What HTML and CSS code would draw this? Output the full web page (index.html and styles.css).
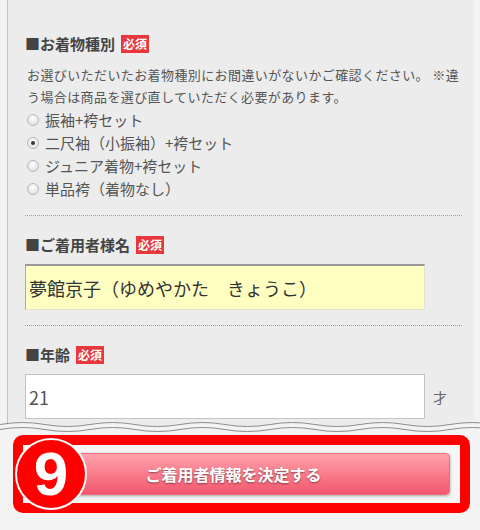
FILE: index.html
```html
<!DOCTYPE html>
<html lang="ja">
<head>
<meta charset="utf-8">
<title>ご着用者情報</title>
<link rel="stylesheet" href="styles.css">
</head>
<body>
<div class="panel">
  <section class="field">
    <h3 class="label">■お着物種別<span class="badge">必須</span></h3>
    <p class="desc">お選びいただいたお着物種別にお間違いがないかご確認ください。 ※違う場合は商品を選び直していただく必要があります。</p>
    <ul class="radios">
      <li class="radio"><span class="dot"></span>振袖+袴セット</li>
      <li class="radio checked"><span class="dot"></span>二尺袖（小振袖）+袴セット</li>
      <li class="radio"><span class="dot"></span>ジュニア着物+袴セット</li>
      <li class="radio"><span class="dot"></span>単品袴（着物なし）</li>
    </ul>
  </section>
  <section class="field">
    <h3 class="label">■ご着用者様名<span class="badge">必須</span></h3>
    <input class="input input-filled" type="text" value="夢館京子（ゆめやかた　きょうこ）">
  </section>
  <section class="field field-last">
    <h3 class="label">■年齢<span class="badge">必須</span></h3>
    <div class="age-row">
      <input class="input input-age" type="text" value="21">
      <span class="unit">才</span>
    </div>
  </section>
</div>
<svg class="wave" width="480" height="14" viewBox="0 0 480 14">
  <defs><clipPath id="pc"><rect x="8" y="0" width="466" height="14"/></clipPath></defs>
  <path clip-path="url(#pc)" fill="#ececec" d="M0 4.5 Q22.5 -0.5 45 4.5 T90 4.5 T135 4.5 T180 4.5 T225 4.5 T270 4.5 T315 4.5 T360 4.5 T405 4.5 T450 4.5 T495 4.5 L495 0 L0 0 Z"/>
  <line x1="7.5" y1="0" x2="7.5" y2="5.5" stroke="#c4c4c4"/>
  <path fill="none" stroke="#8c8c8c" d="M0 5.5 Q22.5 1.5 45 5.5 T90 5.5 T135 5.5 T180 5.5 T225 5.5 T270 5.5 T315 5.5 T360 5.5 T405 5.5 T450 5.5 T495 5.5"/>
  <path fill="none" stroke="#8c8c8c" d="M0 10.5 Q22.5 6.5 45 10.5 T90 10.5 T135 10.5 T180 10.5 T225 10.5 T270 10.5 T315 10.5 T360 10.5 T405 10.5 T450 10.5 T495 10.5"/>
</svg>
<div class="action">
  <div class="highlight">
    <span class="step">9</span>
    <button class="submit" type="button">ご着用者情報を決定する</button>
  </div>
</div>
</body>
</html>
```
FILE: styles.css
```css
html, body {
  margin: 0;
  padding: 0;
}
body {
  width: 480px;
  height: 530px;
  overflow: hidden;
  background: #f3f3f3;
  font-family: "Noto Sans CJK JP", "Noto Sans", sans-serif;
  color: #555;
}
.panel {
  box-sizing: border-box;
  margin-left: 7px;
  width: 467px;
  border-left: 1px solid #c4c4c4;
  background: #ececec;
  padding: 34px 12px 0 17px;
}
.field {
  padding: 19px 0 15px;
  border-top: 1px dotted #a0a0a0;
}
.field:first-child {
  padding-top: 0;
  border-top: none;
}
.field-last {
  padding-bottom: 0;
}
.label {
  margin: 0;
  display: flex;
  align-items: center;
  gap: 6px;
  font-size: 15px;
  line-height: 20px;
  font-weight: bold;
  color: #444;
}
.badge {
  font-size: 12px;
  line-height: 18px;
  padding: 0 2px;
  background: #e8383d;
  color: #fff;
  font-weight: bold;
}
.desc {
  margin: 10px 0 0 2px;
  font-size: 13px;
  letter-spacing: 0.4px;
  line-height: 22px;
  color: #555;
}
.radios {
  list-style: none;
  margin: 0;
  padding: 0;
}
.radio {
  display: flex;
  align-items: center;
  gap: 6px;
  height: 23px;
  padding-left: 2px;
  font-size: 15px;
  color: #555;
}
.dot {
  box-sizing: border-box;
  flex: none;
  width: 12px;
  height: 12px;
  border-radius: 50%;
  border: 1px solid #b8b8b8;
  background: radial-gradient(circle at 50% 35%, #ffffff, #d8d8d8);
  position: relative;
}
.checked .dot::after {
  content: "";
  position: absolute;
  left: 3px;
  top: 3px;
  width: 4px;
  height: 4px;
  border-radius: 50%;
  background: #333;
}
.input {
  box-sizing: border-box;
  display: block;
  width: 400px;
  height: 45px;
  margin: 9px 0 0;
  padding: 0 3px;
  font-family: "Noto Sans CJK JP", "Noto Sans", sans-serif;
  outline: none;
}
.input-filled {
  height: 46px;
  background: #ffffc2;
  border: 1px solid #e2e2d0;
  border-top: 2px solid #999;
  border-left: 1px solid #a8a8a8;
  font-size: 18px;
  color: #333;
}
.age-row {
  display: flex;
  align-items: center;
  gap: 8px;
  margin-top: 9px;
}
.input-age {
  margin: 0;
  background: #fff;
  border: 1px solid #c4c4c4;
  font-size: 18px;
  color: #555;
}
.unit {
  font-size: 14px;
  color: #666;
}
.wave {
  display: block;
}
.action {
  padding: 2px 10px 0 13px;
}
.highlight {
  position: relative;
  box-sizing: border-box;
  width: 457px;
  border: 10px solid #ff0000;
  border-radius: 10px;
  background: #f6f6f6;
  padding: 8px 10px 8px 8px;
}
.submit {
  display: block;
  width: 100%;
  height: 42px;
  border: 1px solid #ec6c7c;
  border-radius: 4px;
  background: linear-gradient(#ffa2ac, #f3566c);
  box-shadow: 0 1px 3px rgba(0, 0, 0, 0.35);
  color: #fff;
  font-family: "Noto Sans CJK JP", "Noto Sans", sans-serif;
  font-size: 16px;
  font-weight: bold;
  text-shadow: 0 1px 2px rgba(0, 0, 0, 0.45);
  padding: 0 14px 0 0;
}
.step {
  position: absolute;
  left: -8px;
  top: -7px;
  box-sizing: border-box;
  width: 72px;
  height: 72px;
  border-radius: 50%;
  border: 2px solid #fff;
  background: #ff0000;
  color: #fff;
  font-family: "Liberation Sans", Arial, sans-serif;
  font-weight: bold;
  font-size: 62px;
  line-height: 68px;
  text-align: center;
}
```
